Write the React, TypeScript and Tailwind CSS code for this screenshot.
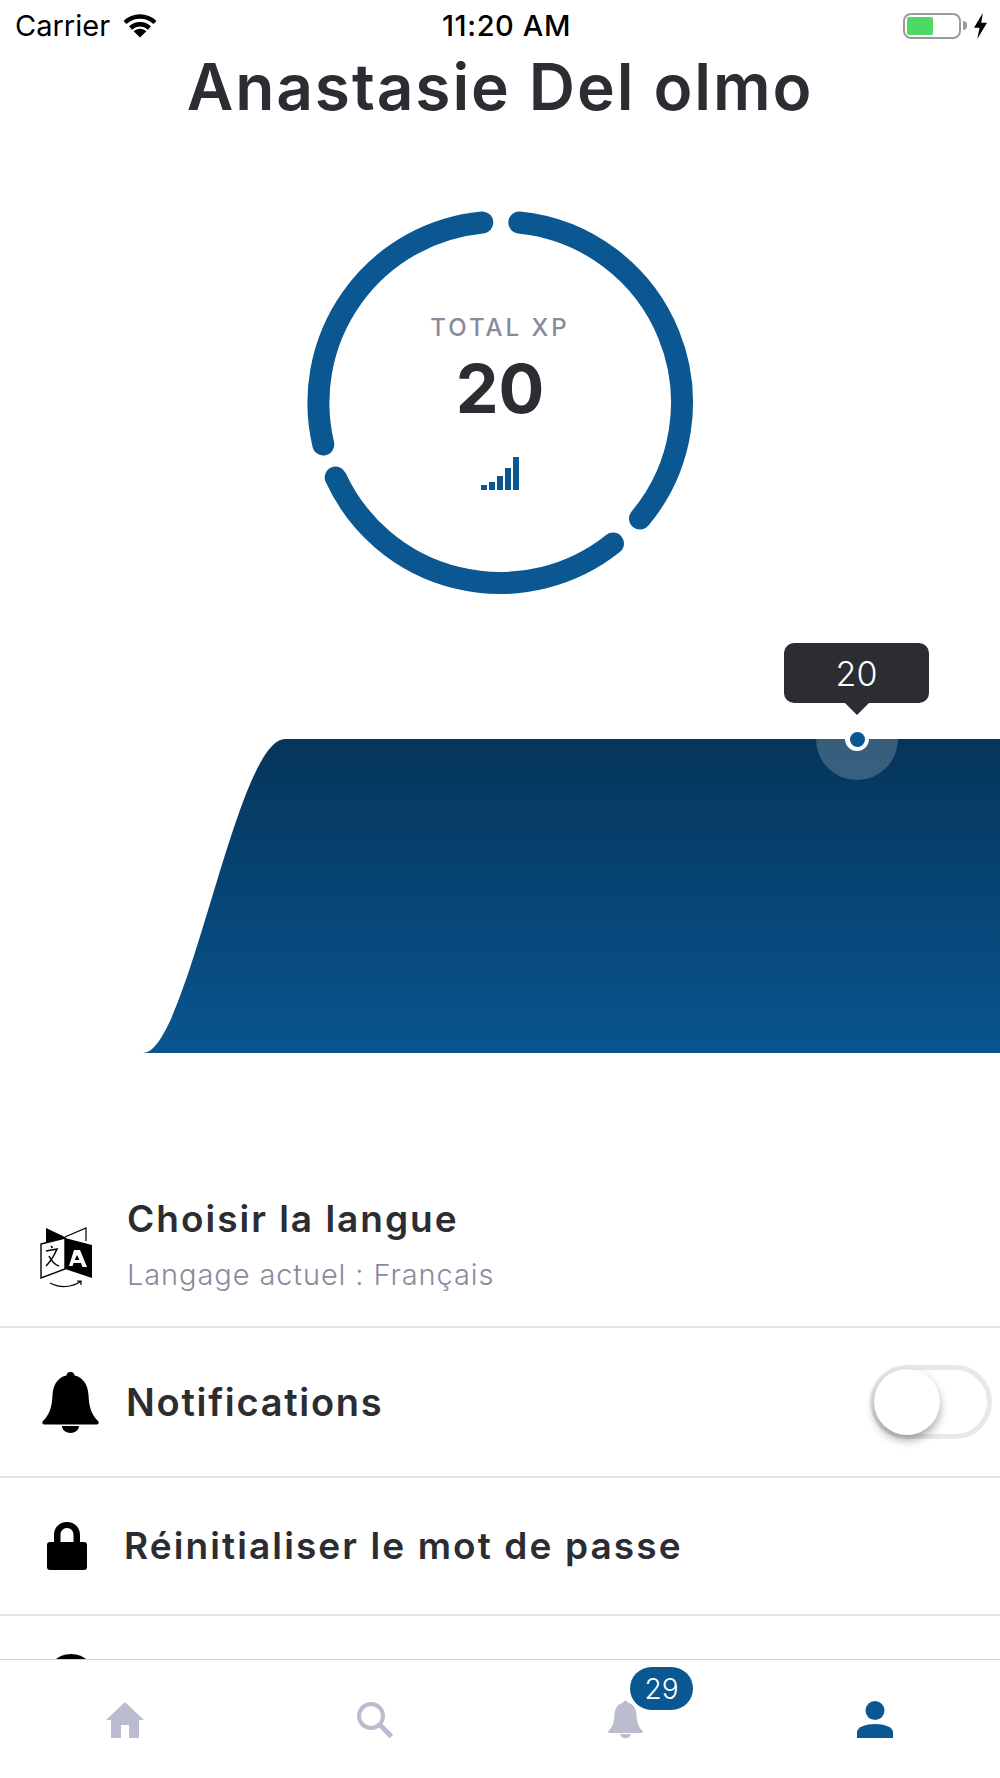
const sans = "font-['Inter',sans-serif]";

function WifiIcon() {
  return (
    <svg viewBox="0 0 34 24" className="h-[24px] w-[34px]" fill="none" stroke="black" strokeWidth="4.4">
      <path d="M2 8.5C10.5 0.5 23.5 0.5 32 8.5" />
      <path d="M7.5 14C13 9 21 9 26.5 14" />
      <path d="M17 23.5L10.6 17.2C14 13.8 20 13.8 23.4 17.2Z" fill="black" stroke="none" />
    </svg>
  );
}

function StatusBar() {
  return (
    <div className={`${sans} grid h-[50px] shrink-0 grid-cols-3 items-center pl-[15px] pr-[12px] pt-[1px] text-[29px] text-black`}>
      <div className="flex items-center gap-[13px]">
        <span>Carrier</span>
        <WifiIcon />
      </div>
      <span className="ml-[10px] text-center font-medium tracking-[0.6px]">11:20 AM</span>
      <div className="flex items-center justify-end gap-[6px]">
        <div className="flex items-center gap-[2px]">
          <div className="h-[26px] w-[58px] rounded-[8px] border-[2.5px] border-[#9b9b9b] p-[2px]">
            <div className="h-full w-[26px] rounded-[2px] bg-[#4cd964]" />
          </div>
          <div className="h-[9px] w-[4px] rounded-r-full bg-[#9b9b9b]" />
        </div>
        <svg viewBox="0 0 16 28" className="h-[26px] w-[15px]" fill="black">
          <path d="M10.5 0L1 16H7L4.5 28L15 10.5H8.8Z" />
        </svg>
      </div>
    </div>
  );
}

function XpRing() {
  return (
    <div className="relative mx-auto mt-[80px] h-[400px] w-[400px]">
      <svg viewBox="0 0 400 400" className="h-full w-full" fill="none" stroke="#0a5792" strokeWidth="22" strokeLinecap="round">
        <path d="M219.3 19.5A181 181 0 0 1 340 315.5" />
        <path d="M313 340.5A181 181 0 0 1 35.7 274.5" />
        <path d="M23.3 241.5A181 181 0 0 1 182.3 19.5" />
      </svg>
      <div className="absolute inset-0 flex flex-col items-center">
        <span className={`${sans} mt-[109px] text-[24px] font-medium leading-[32px] tracking-[3px] text-[#8a8a9c]`}>TOTAL XP</span>
        <span className={`${sans} mt-[8px] text-[68px] font-bold leading-[72px] text-[#2c2c33]`}>20</span>
        <div className="mt-[33px] flex h-[33px] items-end gap-[2px]">
          <div className="h-[5px] w-[6px] bg-[#0a5792]" />
          <div className="h-[8px] w-[6px] bg-[#0a5792]" />
          <div className="h-[14px] w-[6px] bg-[#0a5792]" />
          <div className="h-[22px] w-[6px] bg-[#0a5792]" />
          <div className="h-[33px] w-[6px] bg-[#0a5792]" />
        </div>
      </div>
    </div>
  );
}

function XpChart() {
  return (
    <div className="relative mt-[136px] h-[314px] w-full">
      <svg viewBox="0 0 1000 314" className="h-full w-full">
        <defs>
          <linearGradient id="area" x1="0" y1="0" x2="0" y2="1">
            <stop offset="0" stopColor="#05355a" />
            <stop offset="1" stopColor="#09558f" />
          </linearGradient>
        </defs>
        <path d="M143 314C188 314 236 0 285 0H1000V314Z" fill="url(#area)" />
      </svg>
      {/* halo + point */}
      <div className="absolute left-[816px] top-[-41px] h-[82px] w-[82px] rounded-full bg-white/20" />
      <div className="absolute left-[845px] top-[-12px] flex h-[24px] w-[24px] items-center justify-center rounded-full bg-white">
        <div className="h-[15px] w-[15px] rounded-full bg-[#0a5792]" />
      </div>
      {/* tooltip */}
      <div className={`${sans} absolute left-[784px] top-[-96px] flex h-[60px] w-[145px] items-center justify-center rounded-[10px] bg-[#2c2c33] text-[34px] font-light text-white`}>
        20
      </div>
      <div className="absolute left-[845px] top-[-36px] h-0 w-0 border-x-[12px] border-t-[12px] border-x-transparent border-t-[#2c2c33]" />
    </div>
  );
}

function LanguageIcon() {
  return (
    <svg viewBox="0 0 52 62" className="h-[62px] w-[52px]">
      <path d="M25 10L46 1V14" fill="none" stroke="black" strokeWidth="1.2" />
      <path d="M6 1L25 10V11L6 16Z" fill="black" />
      <path d="M1 17L25 11V42L1 51Z" fill="white" stroke="black" strokeWidth="1.4" />
      <path d="M25 11L52 18V51L25 42Z" fill="black" />
      <path d="M34 23H40L47 40H42.500L41 36H33.500L32.500 39H29ZM37 28L34.700 33H39.500Z" fill="white" fillRule="evenodd" />
      <path d="M11 19L12.500 21M6 24L17 22C14 29 10 35 6 39M9 29C12 35 15 38 19 39" fill="none" stroke="black" strokeWidth="1.5" />
      <path d="M10 56C19 61 32 61 41 54M37 54L41 54L41 58" fill="none" stroke="black" strokeWidth="1.2" />
    </svg>
  );
}

function BellIcon({ className, fill }: { className: string; fill: string }) {
  return (
    <svg viewBox="0 0 57 61" className={className} fill={fill}>
      <circle cx="28.5" cy="4" r="4" />
      <path d="M28.5 3C40 3 46 12 46.5 23C47 36 50 43 56 49C57.500 51 56.500 52.500 54 52.500H3C0.500 52.500 -0.500 51 1 49C7 43 10 36 10.500 23C11 12 17 3 28.500 3Z" />
      <path d="M20 54H37C37 58 33 61 28.500 61C24 61 20 58 20 54Z" />
    </svg>
  );
}

function Rows() {
  return (
    <div className="w-full">
      <div className="flex h-[144px] items-start border-b-2 border-[#e2e2e2]">
        <div className="ml-[40px] mt-[43px]"><LanguageIcon /></div>
        <div className="ml-[35px] mt-[13px] flex flex-col">
          <span className={`${sans} text-[37px] font-semibold leading-[44px] tracking-[2px] text-[#2c2c33]`}>Choisir la langue</span>
          <span className={`${sans} mt-[18px] text-[29px] font-light leading-[32px] tracking-[0.9px] text-[#8a8a9c]`}>Langage actuel : Français</span>
        </div>
      </div>
      <div className="flex h-[150px] items-center border-b-2 border-[#e2e2e2]">
        <div className="ml-[42px]"><BellIcon className="h-[61px] w-[57px]" fill="black" /></div>
        <span className={`${sans} ml-[27px] text-[38px] font-semibold tracking-[1.7px] text-[#2c2c33]`}>Notifications</span>
        <div className="ml-auto mr-[8px] h-[74px] w-[122px] rounded-full border-[5px] border-[#e8e8e8]">
          <div className="ml-[-1px] mt-[-1px] h-[66px] w-[66px] rounded-full bg-white shadow-[0_5px_10px_rgba(0,0,0,0.35)]" />
        </div>
      </div>
      <div className="flex h-[138px] items-center border-b-2 border-[#e2e2e2]">
        <svg viewBox="0 0 40 48" className="ml-[47px] h-[48px] w-[40px]" fill="black">
          <path d="M7 20V13C7 5 13 0 20 0C27 0 33 5 33 13V20H26.500V13C26.500 9 24 6 20 6C16 6 13.500 9 13.500 13V20Z" />
          <rect x="0" y="20" width="40" height="28" rx="3" />
        </svg>
        <span className={`${sans} ml-[37px] text-[37px] font-semibold tracking-[2.1px] text-[#2c2c33]`}>Réinitialiser le mot de passe</span>
      </div>
      <div className="h-[120px] pt-[38px]">
        <div className="ml-[46px] h-[50px] w-[50px] rounded-full border-[5px] border-black" />
      </div>
    </div>
  );
}

function TabBar() {
  return (
    <div className="relative grid h-[119px] shrink-0 grid-cols-4 border-t border-[#cfcfcf] bg-white">
      <div className="flex justify-center pt-[42px]">
        <svg viewBox="0 0 38 36" className="h-[36px] w-[38px]" fill="#bbbccf">
          <path d="M19 0L38 18H33V36H23V23H15V36H5V18H0Z" />
        </svg>
      </div>
      <div className="flex justify-center pt-[42px]">
        <svg viewBox="0 0 36 36" className="h-[36px] w-[36px]" fill="none" stroke="#bbbccf" strokeWidth="4">
          <circle cx="14" cy="14" r="12" />
          <path d="M22.500 22.500L34.500 34.500" strokeWidth="5" />
        </svg>
      </div>
      <div className="relative flex justify-center pt-[40px]">
        <BellIcon className="h-[39px] w-[35px]" fill="#bbbccf" />
        <div className={`${sans} absolute left-[130px] top-[7px] flex h-[43px] w-[63px] items-center justify-center rounded-[22px] bg-[#0a5792] text-[28px] font-light text-white`}>
          29
        </div>
      </div>
      <div className="flex justify-center pt-[41px]">
        <svg viewBox="0 0 36 37" className="h-[37px] w-[36px]" fill="#0a5792">
          <circle cx="18" cy="9.500" r="9.500" />
          <path d="M0 37V31C0 26 9 23 18 23C27 23 36 26 36 31V37Z" />
        </svg>
      </div>
    </div>
  );
}

export default function App() {
  return (
    <div className="flex h-[1778px] w-[1000px] flex-col overflow-hidden bg-white">
      <StatusBar />
      {/* scrolled content runs under the tab bar, which paints over it */}
      <div className="min-h-0 flex-1">
        <h1 className={`${sans} mt-[1px] text-center text-[64px] font-semibold leading-[72px] tracking-[1.9px] text-[#2c2c33]`}>
          Anastasie Del olmo
        </h1>
        <XpRing />
        <XpChart />
        <div className="mt-[131px]">
          <Rows />
        </div>
      </div>
      <TabBar />
    </div>
  );
}
